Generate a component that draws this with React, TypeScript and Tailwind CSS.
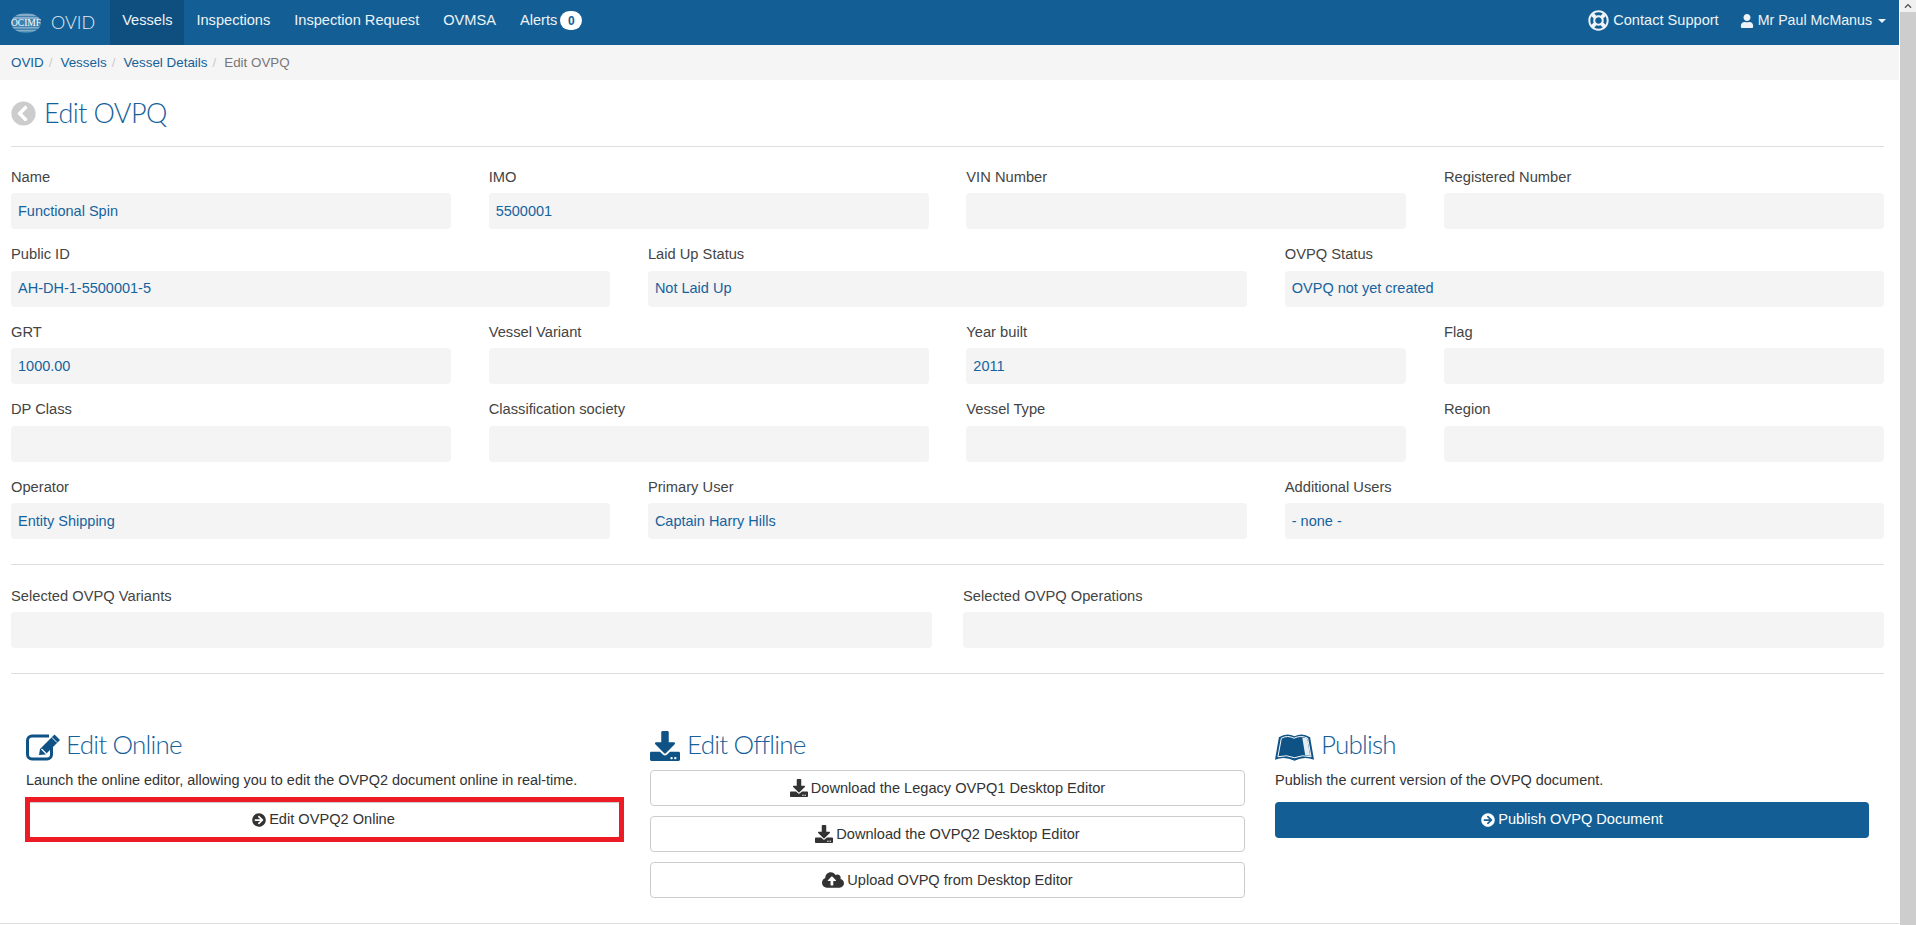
import React from "react";
import {
  FaArrowCircleRight,
  FaChevronCircleLeft,
  FaChevronUp,
  FaCloudUploadAlt,
  FaDownload,
  FaRegLifeRing,
  FaUser,
} from "react-icons/fa";

const navLinks = ["Vessels", "Inspections", "Inspection Request", "OVMSA"];

const fieldRows = [
  {
    cols: "grid-cols-4",
    fields: [
      ["Name", "Functional Spin"],
      ["IMO", "5500001"],
      ["VIN Number", ""],
      ["Registered Number", ""],
    ],
  },
  {
    cols: "grid-cols-3",
    fields: [
      ["Public ID", "AH-DH-1-5500001-5"],
      ["Laid Up Status", "Not Laid Up"],
      ["OVPQ Status", "OVPQ not yet created"],
    ],
  },
  {
    cols: "grid-cols-4",
    fields: [
      ["GRT", "1000.00"],
      ["Vessel Variant", ""],
      ["Year built", "2011"],
      ["Flag", ""],
    ],
  },
  {
    cols: "grid-cols-4",
    fields: [
      ["DP Class", ""],
      ["Classification society", ""],
      ["Vessel Type", ""],
      ["Region", ""],
    ],
  },
  {
    cols: "grid-cols-3",
    fields: [
      ["Operator", "Entity Shipping"],
      ["Primary User", "Captain Harry Hills"],
      ["Additional Users", "- none -"],
    ],
  },
];

function Logo() {
  return (
    <svg width="30" height="20" viewBox="0 0 30 20" className="shrink-0">
      <defs>
        <clipPath id="logo-oval">
          <ellipse cx="15" cy="10" rx="15" ry="10" />
        </clipPath>
      </defs>
      <g clipPath="url(#logo-oval)">
        <rect width="30" height="20" fill="#3f83b0" />
        <rect y="1" width="30" height="2" fill="#86abc8" />
        <rect y="4" width="30" height="2" fill="#86abc8" />
        <rect y="14" width="30" height="1.5" fill="#86abc8" />
        <rect y="17" width="30" height="1.5" fill="#86abc8" />
      </g>
      <text x="15" y="13" textAnchor="middle" fill="#fff" fontSize="9.5" fontFamily="'Liberation Serif', serif" textLength="30">
        OCIMF
      </text>
    </svg>
  );
}

function EditIcon() {
  return (
    <svg width="35" height="28" viewBox="0 0 35 28" className="-mr-[2px] shrink-0 text-[#0f5285]">
      <path d="M23 3H6a4.500 4.500 0 0 0-4.500 4.500v14A4.500 4.500 0 0 0 6 26h15a4.500 4.500 0 0 0 4.500-4.500V14" fill="none" stroke="currentColor" strokeWidth="3" />
      <path d="M13 22l1-6L28.500 1.500l5.500 5.500L19.500 21.500 13 22z" fill="currentColor" />
      <path d="M15.500 16l5 5" stroke="#fff" strokeWidth="1.200" />
      <path d="M26 4.500l5 5" stroke="#fff" strokeWidth="1" />
    </svg>
  );
}

function BookIcon() {
  return (
    <svg width="39" height="28" viewBox="0 0 40 28" className="shrink-0">
      <path d="M0 27L4 4Q12 -1 20 3Q28 -1 36 4L40 27Q30 23 20 28Q10 23 0 27z" fill="#0f5285" />
      <path d="M3 24L6.500 5Q13 1.500 19.500 5Q26.500 1.500 33.500 5L37 24Q28 21.500 20 25Q12 21.500 3 24z" fill="none" stroke="#fff" strokeWidth="1" />
      <path d="M28 4.500L33 5L36 23L31 22.500z" fill="#e4edf4" />
    </svg>
  );
}

function Field({ label, value }: { label: string; value: string }) {
  return (
    <div className="min-w-0">
      <div className="mb-[5px] h-[21.4px] text-[14.7px] leading-[21.4px] text-[#444]">{label}</div>
      <div className="flex h-9 items-center rounded-[4px] bg-[#f4f4f4] px-[7px] text-[14.5px] text-[#14639e]">{value}</div>
    </div>
  );
}

function OutlineButton({ icon, label }: { icon: React.ReactNode; label: string }) {
  return (
    <button className="flex h-9 w-full items-center justify-center gap-[3px] rounded-[4px] border border-[#ccc] bg-white text-[14.6px] text-[#333]">
      {icon}
      {label}
    </button>
  );
}

function SectionTitle({ icon, title }: { icon: React.ReactNode; title: string }) {
  return (
    <div className="flex h-[46px] items-end gap-[7px] pb-[9px]">
      {icon}
      <span className="font-['Lato',sans-serif] text-[26px] leading-[34px] font-light tracking-[-0.8px] text-[#14609a]">{title}</span>
    </div>
  );
}

export default function App() {
  return (
    <div className="flex h-[925px] overflow-hidden bg-white font-['Liberation_Sans',Arial,sans-serif] text-sm">
      <div className="min-w-0 flex-1">
        <nav className="flex h-[45px] items-stretch bg-[#135f95] text-[14.6px] text-[#eef3f7]">
          <div className="flex items-center pr-[15px] pl-[11px]">
            <Logo />
            <span className="ml-[10px] font-['Lato',sans-serif] text-[18px] font-light text-[#e3ebf2]">OVID</span>
          </div>
          {navLinks.map((link, i) => (
            <a key={link} className={`flex items-center px-3 pb-1 ${i === 0 ? "bg-[#0e4f80]" : ""}`}>
              {link}
            </a>
          ))}
          <a className="flex items-center px-3 pb-1">
            Alerts
            <span className="ml-[3px] flex h-[19px] w-[22px] items-center justify-center rounded-full bg-white text-xs font-bold text-[#135f95]">0</span>
          </a>
          <div className="ml-auto flex items-center pb-1">
            <FaRegLifeRing className="mr-1 size-[21px]" />
            <span>Contact Support</span>
            <FaUser className="mr-1 ml-[21px] size-[14px]" />
            <span className="text-[14.2px]">Mr Paul McManus</span>
            <span className="mr-[13px] ml-[6px] border-x-4 border-t-4 border-x-transparent border-t-[#eef3f7]" />
          </div>
        </nav>

        <div className="flex h-[35px] items-center bg-[#f5f5f5] pl-[11px] text-[13.4px]">
          <a className="text-[#14609a]">OVID</a>
          <span className="px-[5px] text-[#ccc]">/</span>
          <a className="ml-[3px] text-[#14609a]">Vessels</a>
          <span className="px-[5px] text-[#ccc]">/</span>
          <a className="ml-[3px] text-[#14609a]">Vessel Details</a>
          <span className="px-[5px] text-[#ccc]">/</span>
          <span className="ml-[3px] text-[#777]">Edit OVPQ</span>
        </div>

        <main className="pr-[15px] pl-[11px]">
          <div className="flex h-[66px] items-center gap-2">
            <FaChevronCircleLeft className="size-[25px] text-[#ccc]" />
            <h1 className="font-['Lato',sans-serif] text-[27px] font-light tracking-[-0.6px] text-[#14609a]">Edit OVPQ</h1>
          </div>
          <hr className="mb-5 border-[#ddd]" />

          {fieldRows.map((row) => (
            <div key={row.fields[0][0]} className={`mb-[15px] grid gap-x-[37.67px] ${row.cols}`}>
              {row.fields.map(([label, value]) => (
                <Field key={label} label={label} value={value} />
              ))}
            </div>
          ))}

          <hr className="mt-[25px] mb-[21px] border-[#ddd]" />

          <div className="grid grid-cols-2 gap-x-[31px]">
            <Field label="Selected OVPQ Variants" value="" />
            <Field label="Selected OVPQ Operations" value="" />
          </div>

          <hr className="mt-[25px] border-[#ddd]" />

          <div className="mt-[50px] mr-[15px] ml-[15px] grid grid-cols-3 items-start gap-x-[29px] pb-[25px]">
            <section>
              <SectionTitle icon={<EditIcon />} title="Edit Online" />
              <p className="mb-[10px] h-[21.4px] text-[14.45px] leading-[21.4px] text-[#333]">
                Launch the online editor, allowing you to edit the OVPQ2 document online in real-time.
              </p>
              <div className="relative">
                <OutlineButton icon={<FaArrowCircleRight className="size-[14px]" />} label="Edit OVPQ2 Online" />
                <div className="absolute -top-[5px] -right-[3px] -bottom-[4px] -left-px border-[5px] border-[#ed1c24]" />
              </div>
            </section>

            <section>
              <SectionTitle icon={<FaDownload className="size-[30px] text-[#0f5285]" />} title="Edit Offline" />
              <div className="flex flex-col gap-[10px]">
                <OutlineButton icon={<FaDownload className="size-[18px]" />} label="Download the Legacy OVPQ1 Desktop Editor" />
                <OutlineButton icon={<FaDownload className="size-[18px]" />} label="Download the OVPQ2 Desktop Editor" />
                <OutlineButton icon={<FaCloudUploadAlt className="size-[22px]" />} label="Upload OVPQ from Desktop Editor" />
              </div>
            </section>

            <section className="pl-px">
              <SectionTitle icon={<BookIcon />} title="Publish" />
              <p className="mb-[10px] h-[21.4px] text-[14.45px] leading-[21.4px] text-[#333]">Publish the current version of the OVPQ document.</p>
              <button className="flex h-9 w-full items-center justify-center gap-[3px] rounded-[4px] bg-[#135f95] text-[14.6px] text-white">
                <FaArrowCircleRight className="size-[14px]" />
                Publish OVPQ Document
              </button>
            </section>
          </div>
        </main>
        <hr className="border-[#ddd]" />
      </div>

      <div className="flex w-[17px] flex-col pl-px">
        <div className="flex h-3 items-center justify-center bg-[#f1f1f1] text-[#505050]">
          <FaChevronUp className="size-2" />
        </div>
        <div className="flex-1 bg-[#cdcdcd]" />
      </div>
    </div>
  );
}
